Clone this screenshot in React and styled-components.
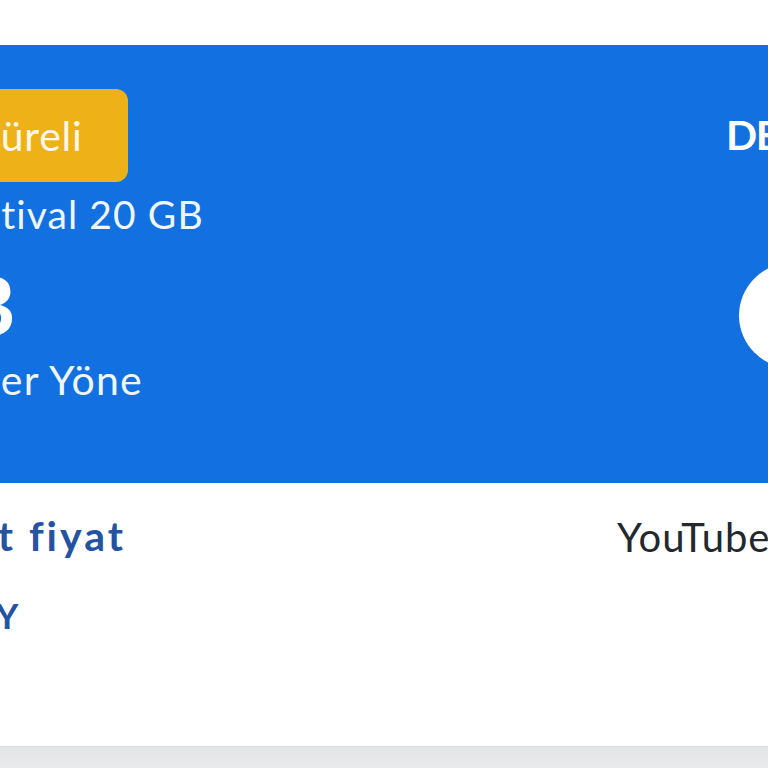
import styled, { createGlobalStyle } from 'styled-components';

const GlobalStyle = createGlobalStyle`
    * {
        box-sizing: border-box;
    }

    body {
        margin: 0;
        background: #ffffff;
        font-family: Lato, "Noto Sans", sans-serif;
    }
`;

const App = () => {
    return (
        <Page>
            <GlobalStyle />
            <Card>
                <Header>
                    <LeftCol>
                        <Badge $shift={-67}>Süreli</Badge>
                        <Title $shift={-60}>Festival 20 GB</Title>
                        <Amount $shift={-213}>20 GB</Amount>
                        <Sub $shift={-31}>Her Yöne</Sub>
                    </LeftCol>
                    <RightCol>
                        <Detail>DETAY</Detail>
                        <Circle />
                    </RightCol>
                </Header>
                <Footer>
                    <LeftCol>
                        <PriceLabel $shift={-91}>Sabit fiyat</PriceLabel>
                        <PriceValue $shift={-26}>AY</PriceValue>
                    </LeftCol>
                    <FooterRight>
                        <Service>YouTube Premium</Service>
                    </FooterRight>
                </Footer>
            </Card>
            <Shade />
        </Page>
    );
}

export default App;

const Page = styled.div`
    width: 768px;
    height: 768px;
    overflow: hidden;
    padding-top: 45px;
    background: #ffffff;
`;

const Card = styled.div`
    width: 100%;
    background: #ffffff;
`;

const Header = styled.div`
    height: 438px;
    background: #1370e0;
    display: flex;
    justify-content: space-between;
    color: #eef6ff;
`;

const LeftCol = styled.div`
    flex: 1;
    min-width: 0;
    display: flex;
    flex-direction: column;
    align-items: flex-start;
`;

const Shifted = styled.div`
    margin-left: ${p => p.$shift || 0}px;
    white-space: nowrap;
`;

const Badge = styled(Shifted)`
    margin-top: 44px;
    height: 93px;
    padding: 0 45px;
    display: inline-flex;
    align-items: center;
    background: #eeb118;
    border-radius: 12px;
    color: #fff8e6;
    font-size: 41px;
    line-height: 48px;
    letter-spacing: 0.8px;
`;

const Title = styled(Shifted)`
    margin-top: 9px;
    font-size: 39px;
    line-height: 46px;
    letter-spacing: 1.1px;
`;

const Amount = styled(Shifted)`
    margin-top: 26px;
    font-size: 82px;
    font-weight: 700;
    line-height: 82px;
    color: #ffffff;
`;

const Sub = styled(Shifted)`
    margin-top: 11px;
    font-size: 41px;
    line-height: 48px;
    letter-spacing: 1.2px;
`;

const RightCol = styled.div`
    flex: 0 0 220px;
    margin-right: -180px;
    display: flex;
    flex-direction: column;
`;

const Detail = styled.div`
    margin-top: 66px;
    margin-left: -2px;
    font-size: 41px;
    line-height: 48px;
    font-weight: 700;
    letter-spacing: -1.5px;
    color: #ffffff;
    white-space: nowrap;
`;

const Circle = styled.div`
    margin-top: 104px;
    margin-left: 11px;
    width: 105px;
    height: 105px;
    border-radius: 50%;
    background: #ffffff;
`;

const Footer = styled.div`
    height: 263px;
    display: flex;
    justify-content: space-between;
`;

const PriceLabel = styled(Shifted)`
    margin-top: 29px;
    font-size: 41px;
    line-height: 48px;
    font-weight: 700;
    letter-spacing: 3px;
    color: #2453a3;
`;

const PriceValue = styled(Shifted)`
    margin-top: 34px;
    font-size: 35px;
    line-height: 42px;
    font-weight: 700;
    color: #2453a3;
`;

const FooterRight = styled.div`
    flex: 0 0 151px;
    min-width: 0;
    padding-top: 30px;
`;

const Service = styled.div`
    font-size: 40px;
    line-height: 48px;
    letter-spacing: 1px;
    color: #23272e;
    white-space: nowrap;
`;

const Shade = styled.div`
    height: 40px;
    border-top: 1px solid #dcdde0;
    background: linear-gradient(#e3e4e6, #eff0f2);
`;
